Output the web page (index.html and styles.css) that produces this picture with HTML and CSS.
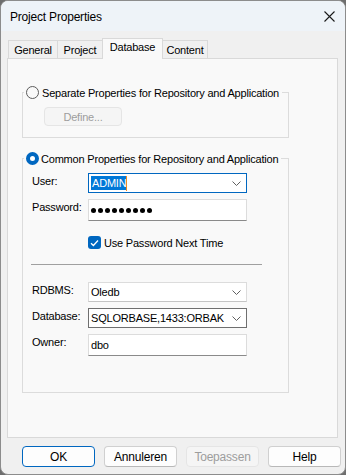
FILE: index.html
```html
<!DOCTYPE html>
<html lang="nl">
<head>
  <meta charset="UTF-8" />
  <title>Project Properties</title>
  <link rel="stylesheet" href="styles.css">
</head>
<body>

  <div class="window">
    <div class="titlebar">
      <span class="title">Project Properties</span>
      <svg class="close" width="11" height="11" viewBox="0 0 11 11">
        <path d="M0.5 0.5L10.5 10.5M10.5 0.5L0.5 10.5" stroke="#1a1a1a" stroke-width="1.1" fill="none"/>
      </svg>
    </div>

    <div class="tabs">
      <div class="tab t-general">General</div>
      <div class="tab t-project">Project</div>
      <div class="tab t-database active">Database</div>
      <div class="tab t-content">Content</div>
    </div>

    <div class="panel">
      <fieldset class="group group-sep">
        <legend><span class="radio"></span>Separate Properties for Repository and Application</legend>
        <div class="group-body">
          <button class="btn btn-define" disabled>Define...</button>
        </div>
      </fieldset>

      <fieldset class="group group-common">
        <legend><span class="radio checked"></span>Common Properties for Repository and Application</legend>
        <div class="group-body">

          <div class="row">
            <label>User:</label>
            <div class="field combo focus">
              <span class="sel">ADMIN</span><span class="caret"></span>
              <svg class="chev" width="9" height="5" viewBox="0 0 9 5"><path d="M0.5 0.5L4.5 4.5L8.5 0.5" stroke="#606060" fill="none"/></svg>
            </div>
          </div>

          <div class="row row-tall">
            <label>Password:</label>
            <div class="field edit">
              <span class="dot"></span><span class="dot"></span><span class="dot"></span>
              <span class="dot"></span><span class="dot"></span><span class="dot"></span>
              <span class="dot"></span><span class="dot"></span><span class="dot"></span>
            </div>
          </div>

          <div class="check-row">
            <span class="checkbox">
              <svg width="9" height="8" viewBox="0 0 9 8"><path d="M1 4.2L3.4 6.5L8 1.5" stroke="#fff" stroke-width="1.3" fill="none"/></svg>
            </span>
            Use Password Next Time
          </div>

          <div class="sep"></div>

          <div class="row">
            <label>RDBMS:</label>
            <div class="field combo">
              <span>Oledb</span>
              <svg class="chev" width="9" height="5" viewBox="0 0 9 5"><path d="M0.5 0.5L4.5 4.5L8.5 0.5" stroke="#606060" fill="none"/></svg>
            </div>
          </div>

          <div class="row">
            <label>Database:</label>
            <div class="field combo hover">
              <span>SQLORBASE,1433:ORBAK</span>
              <svg class="chev" width="9" height="5" viewBox="0 0 9 5"><path d="M0.5 0.5L4.5 4.5L8.5 0.5" stroke="#606060" fill="none"/></svg>
            </div>
          </div>

          <div class="row row-tall">
            <label>Owner:</label>
            <div class="field edit">
              <span>dbo</span>
            </div>
          </div>
        </div>
      </fieldset>
    </div>

    <div class="buttons">
      <button class="btn default">OK</button>
      <button class="btn">Annuleren</button>
      <button class="btn" disabled>Toepassen</button>
      <button class="btn">Help</button>
    </div>
  </div>

</body>
</html>
```

FILE: styles.css
```css
html, body {
  margin: 0;
  padding: 0;
  background: #6e6e6e;
}
body {
  width: 346px;
  height: 475px;
  overflow: hidden;
  font-family: "Liberation Sans", Arial, sans-serif;
  font-size: 11px;
  letter-spacing: -0.2px;
  color: #000;
}
.window {
  box-sizing: border-box;
  width: 346px;
  height: 475px;
  background: #f0f0f0;
  border: 1px solid #8c8c8c;
  border-radius: 8px;
  overflow: hidden;
}
.titlebar {
  height: 30px;
  background: #eef3f8;
  display: flex;
  align-items: center;
  justify-content: space-between;
  padding: 0 10px 0 9px;
}
.title {
  font-size: 12px;
  padding-top: 1px;
}
.close {
  margin-top: 1px;
}

/* tabs */
.tabs {
  display: flex;
  align-items: flex-end;
  height: 27px;
  padding-left: 7px;
}
.tab {
  box-sizing: border-box;
  height: 18px;
  border: 1px solid #d9d9d9;
  border-bottom: none;
  background: #f0f0f0;
  text-align: center;
  line-height: 18px;
  margin-right: -1px;
}
.tab.active {
  height: 21px;
  line-height: 17px;
  background: #f9f9f9;
  position: relative;
  z-index: 1;
  margin-bottom: -1px;
}
.t-general { width: 50px; }
.t-project { width: 46px; }
.t-database { width: 61px; }
.t-content { width: 46px; }

.panel {
  box-sizing: border-box;
  width: 331px;
  height: 380px;
  margin-left: 6px;
  background: #f9f9f9;
  border: 1px solid #d9d9d9;
  padding: 27px 0 0 14px;
}

/* group boxes */
.group {
  box-sizing: border-box;
  width: 267px;
  margin: 0;
  padding: 0;
  border: 1px solid #dcdcdc;
  min-width: 0;
}
.group legend {
  display: flex;
  align-items: center;
  white-space: nowrap;
  height: 13px;
  padding: 0 3px 0 2px;
  margin-left: 1px;
}
.radio {
  box-sizing: border-box;
  flex: none;
  width: 13px;
  height: 13px;
  border-radius: 50%;
  border: 1px solid #5c5c5c;
  background: #f9f9f9;
  margin-right: 3px;
}
.radio.checked {
  border: 4px solid #0067c0;
  background: #fff;
  margin-right: 2px;
}
.group-sep .group-body {
  padding: 8px 0 11px 21px;
}
.group-common {
  margin-top: 14px;
  height: 241px;
}
.group-common .group-body {
  padding: 8px 0 0 9px;
}

/* rows */
.row {
  display: flex;
  align-items: flex-start;
  height: 20px;
  margin-bottom: 6px;
}
.row-tall {
  height: 22px;
}
.row label {
  width: 56px;
  padding-top: 2px;
}
.field {
  box-sizing: border-box;
  width: 159px;
  height: 100%;
  display: flex;
  align-items: center;
  padding-left: 2px;
  background: #fff;
  border: 1px solid #dcdcdc;
  white-space: nowrap;
}
.combo {
  position: relative;
  border-bottom-color: #c4c4c4;
}
.combo.focus {
  border: 1px solid #0067c0;
}
.combo.hover {
  border: 1px solid #6f6f6f;
}
.edit {
  border-bottom: 1px solid #8a8a8a;
  padding-left: 2px;
}
.chev {
  position: absolute;
  right: 5px;
  top: 7px;
}
.sel {
  background: #0078d7;
  color: #fff;
  padding: 1px 0 1px 1px;
}
.caret {
  width: 1px;
  height: 15px;
  background: #f08a24;
}
.dot {
  width: 5px;
  height: 5px;
  border-radius: 50%;
  background: #000;
  margin-right: 2px;
}

.check-row {
  display: flex;
  align-items: center;
  margin: 15px 0 0 56px;
  height: 13px;
}
.checkbox {
  box-sizing: border-box;
  width: 13px;
  height: 13px;
  border-radius: 3px;
  background: #0067c0;
  display: flex;
  align-items: center;
  justify-content: center;
  margin-right: 3px;
}
.sep {
  width: 231px;
  height: 1px;
  background: #a0a0a0;
  margin: 15px 0 17px -1px;
}

/* buttons */
.btn {
  box-sizing: border-box;
  width: 73px;
  height: 21px;
  font-family: "Liberation Sans", Arial, sans-serif;
  font-size: 12px;
  letter-spacing: -0.2px;
  color: #000;
  background: #fdfdfd;
  border: 1px solid #d0d0d0;
  border-bottom-color: #b8b8b8;
  border-radius: 4px;
  padding: 0;
}
.btn:disabled {
  background: #f5f5f5;
  color: #9d9d9d;
  border-color: #e5e5e5;
}
.btn.default {
  border: 1px solid #0067c0;
}
.btn-define {
  width: 78px;
  height: 19px;
  font-size: 11px;
}
.buttons {
  display: flex;
  gap: 9px;
  padding: 8px 0 0 21px;
}
```
